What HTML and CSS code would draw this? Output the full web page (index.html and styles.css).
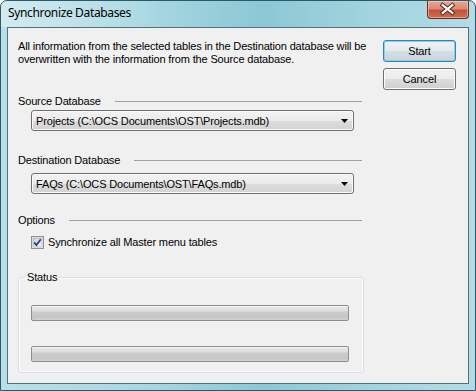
FILE: index.html
```html
<!DOCTYPE html>
<html lang="en">

<head>
    <meta charset="UTF-8">
    <title>Synchronize Databases</title>
    <link rel="stylesheet" href="styles.css">
</head>

<body>
    <div class="window">
        <!-- title bar -->
        <div class="titlebar">
            <span class="title">Synchronize Databases</span>
            <button class="close-btn" aria-label="Close">
                <svg width="42" height="18" viewBox="0 0 42 18">
                    <path d="M16 5 L26 13 M26 5 L16 13" stroke="#5a2418" stroke-width="4.2" stroke-linecap="square" fill="none"/>
                    <path d="M16 5 L26 13 M26 5 L16 13" stroke="#fff" stroke-width="2.2" stroke-linecap="square" fill="none"/>
                </svg>
            </button>
        </div>

        <div class="client">
            <div class="main">
                <p class="intro">All information from the selected tables in the Destination database will be<br>overwritten with the information from the Source database.</p>

                <!-- source -->
                <div class="sep sep-source"><span>Source Database</span></div>
                <div class="combo combo-source">
                    <span>Projects (C:\OCS Documents\OST\Projects.mdb)</span>
                    <svg class="arrow" width="7" height="4" viewBox="0 0 7 4"><path d="M0 0 H7 L3.5 4 Z" fill="#000"/></svg>
                </div>

                <!-- destination -->
                <div class="sep sep-dest"><span>Destination Database</span></div>
                <div class="combo combo-dest">
                    <span>FAQs (C:\OCS Documents\OST\FAQs.mdb)</span>
                    <svg class="arrow" width="7" height="4" viewBox="0 0 7 4"><path d="M0 0 H7 L3.5 4 Z" fill="#000"/></svg>
                </div>

                <!-- options -->
                <div class="sep sep-options"><span>Options</span></div>
                <label class="check">
                    <svg width="13" height="13" viewBox="0 0 13 13">
                        <defs>
                            <linearGradient id="cb" x1="0" y1="0" x2="1" y2="1">
                                <stop offset="0" stop-color="#cbcfd5"/>
                                <stop offset="1" stop-color="#f6f6f6"/>
                            </linearGradient>
                        </defs>
                        <rect x="0.5" y="0.5" width="12" height="12" fill="#f4f4f4" stroke="#8f8f8f"/>
                        <rect x="2" y="2" width="9" height="9" fill="url(#cb)" stroke="#aeb3b9" stroke-width="0.8"/>
                        <path d="M3.2 6.4 L5.4 9 L9.8 3.2" stroke="#2a3f8f" stroke-width="1.8" fill="none"/>
                    </svg>
                    <span>Synchronize all Master menu tables</span>
                </label>

                <!-- status -->
                <fieldset class="status">
                    <legend>Status</legend>
                    <div class="bar"></div>
                    <div class="bar bar-second"></div>
                </fieldset>
            </div>

            <div class="side">
                <button class="btn btn-default">Start</button>
                <button class="btn btn-cancel">Cancel</button>
            </div>
        </div>
    </div>
</body>

</html>
```

FILE: styles.css
```css
* {
    box-sizing: border-box;
}

body {
    margin: 0;
    background: #fff;
    font-family: "Liberation Sans", Arial, sans-serif;
    font-size: 11px;
    letter-spacing: -0.15px;
    color: #000;
}

.window {
    width: 476px;
    height: 391px;
    border: 1px solid #2f5866;
    border-radius: 7px 7px 0 0;
    background: linear-gradient(to right, #b9e0e8 0%, #a8d8e2 30%, #8bc8d4 55%, #a3d5df 80%, #b3dce5 100%);
    display: flex;
    flex-direction: column;
    overflow: hidden;
}

.titlebar {
    height: 26px;
    display: flex;
    justify-content: space-between;
    align-items: flex-start;
    padding-left: 7px;
    background: linear-gradient(to right, rgba(255, 255, 255, 0.35), rgba(255, 255, 255, 0) 35%);
}

.title {
    margin-top: 4px;
    font-family: "Noto Sans", "Open Sans", sans-serif;
    font-size: 12px;
    letter-spacing: -0.35px;
    line-height: 16px;
    color: #000;
}

.close-btn {
    width: 42px;
    height: 18px;
    margin-right: 6px;
    padding: 0;
    border: 1px solid #6b2d22;
    border-top: none;
    border-radius: 0 0 4px 4px;
    background: linear-gradient(#e7a897 0%, #d98a74 45%, #c2533b 55%, #cf6c52 100%);
    box-shadow: inset 0 0 0 1px rgba(255, 220, 210, 0.5);
    display: flex;
}

.close-btn svg {
    margin: -1px 0 0 -1px;
}

.client {
    margin: 0 6px 6px;
    flex: 1;
    border: 1px solid #55707c;
    background: #f0f0f0;
    display: flex;
}

.main {
    width: 356px;
    padding: 12px 0 0 10px;
}

.intro {
    margin: 0;
    line-height: 13px;
    white-space: nowrap;
}

.sep {
    display: flex;
    align-items: center;
    line-height: 13px;
}

.sep::after {
    content: "";
    flex: 1;
    height: 1px;
    margin: 0 2px 0 14px;
    background: #a0a0a0;
}

.sep-source {
    margin-top: 29px;
}

.sep-dest {
    margin-top: 23px;
}

.sep-options {
    margin-top: 20px;
}

.combo {
    width: 323px;
    height: 21px;
    margin-left: 13px;
    padding: 0 5px 0 4px;
    border: 1px solid #707070;
    border-radius: 3px;
    background: linear-gradient(#f3f3f3 0%, #ebebeb 50%, #dddddd 51%, #d2d2d2 100%);
    box-shadow: inset 0 0 0 1px #fafafa;
    display: flex;
    align-items: center;
    justify-content: space-between;
}

.combo-source {
    margin-top: 2px;
}

.combo-dest {
    margin-top: 6px;
}

.check {
    margin: 9px 0 0 13px;
    height: 13px;
    display: flex;
    align-items: center;
    gap: 4px;
    line-height: 13px;
}

.check svg {
    flex: none;
}

.status {
    width: 346px;
    margin: 22px 0 0;
    padding: 0 14px 10px 12px;
    border: 1px solid #d5dfe5;
    border-radius: 3px;
    box-shadow: inset 0 0 0 1px #fbfbfb;
}

.status legend {
    margin-left: -6px;
    padding: 0 2px;
    line-height: 13px;
}

.bar {
    height: 16px;
    margin-top: 21px;
    border: 1px solid #8e8e8e;
    border-radius: 2px;
    background: linear-gradient(#e8e8e8 0%, #dedede 35%, #cbcbcb 45%, #c6c6c6 80%, #d2d2d2 100%);
    box-shadow: inset 0 1px 0 #f4f4f4;
}

.bar-second {
    margin-top: 25px;
}

.side {
    margin-left: 19px;
    padding-top: 12px;
}

.btn {
    display: block;
    width: 73px;
    height: 22px;
    padding: 0;
    border: 1px solid #707070;
    border-radius: 3px;
    background: linear-gradient(#f2f2f2 0%, #ebebeb 50%, #dddddd 51%, #cfcfcf 100%);
    box-shadow: inset 0 0 0 1px #fcfcfc;
    font-family: "Liberation Sans", Arial, sans-serif;
    font-size: 11px;
    letter-spacing: -0.15px;
    color: #000;
}

.btn-default {
    border-color: #3c7fb1;
    background: linear-gradient(#eef2f4 0%, #e4eaed 50%, #d6dee3 51%, #cbd5db 100%);
    box-shadow: inset 0 0 0 1px #7fd3ef;
}

.btn-cancel {
    margin-top: 6px;
}
```
